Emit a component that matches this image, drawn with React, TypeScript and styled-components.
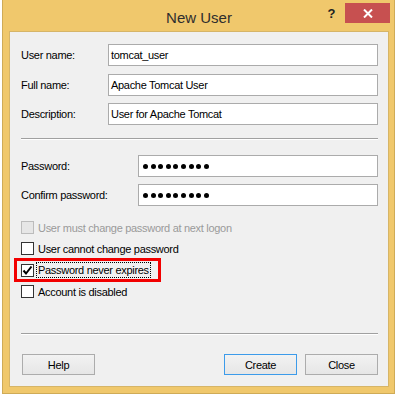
import React from "react";
import styled, { createGlobalStyle, css } from "styled-components";

const GlobalStyle = createGlobalStyle`
  html, body {
    margin: 0;
    padding: 0;
    background: #ffffff;
  }
  body {
    font-family: "Liberation Sans", Arial, sans-serif;
  }
`;

const Window = styled.div`
  margin-left: 2px;
  width: 393px;
  height: 394px;
  box-sizing: border-box;
  background: #f0c86c;
  border: 1px solid #cfab57;
  border-top: none;
  padding: 0 5px 6px 6px;
  display: flex;
  flex-direction: column;
`;

const TitleBar = styled.div`
  height: 31px;
  flex: none;
  display: grid;
  grid-template-columns: 1fr auto 1fr;
  align-items: start;
`;

const Title = styled.div`
  grid-column: 2;
  font-family: "Liberation Sans", Arial, sans-serif;
  font-size: 15px;
  line-height: 30px;
  padding-top: 3px;
  color: #2e2e2e;
  white-space: nowrap;
`;

const Controls = styled.div`
  grid-column: 3;
  justify-self: end;
  display: flex;
  margin-top: 3px;
  margin-right: -1px;
`;

const HelpGlyph = styled.div`
  width: 27px;
  height: 20px;
  display: flex;
  align-items: center;
  justify-content: center;
  font-family: "Liberation Sans", Arial, sans-serif;
  font-weight: bold;
  font-size: 13px;
  color: #222;
`;

const CloseButton = styled.div`
  width: 45px;
  height: 20px;
  background: #c75050;
  display: flex;
  align-items: center;
  justify-content: center;
`;

const Content = styled.div`
  flex: 1;
  background: #f0f0f0;
  border: 1px solid #d6b568;
  padding: 12px 10px 11px 11px;
  display: flex;
  flex-direction: column;
`;

const FieldGrid = styled.div<{ $labelWidth: number; $gap: number }>`
  display: grid;
  grid-template-columns: ${(p) => p.$labelWidth}px 1fr;
  row-gap: ${(p) => p.$gap}px;
  align-items: center;
`;

const textStyle = css`
  font-family: "Liberation Sans", Arial, sans-serif;
  font-size: 11px;
  letter-spacing: -0.3px;
`;

const Label = styled.div`
  ${textStyle};
  color: #000;
  white-space: nowrap;
`;

const TextBox = styled.div`
  ${textStyle};
  height: 22px;
  box-sizing: border-box;
  border: 1px solid #ababab;
  background: #ffffff;
  padding: 0 2px;
  line-height: 20px;
  color: #000;
  white-space: nowrap;
  overflow: hidden;
`;

const PasswordBox = styled.div`
  height: 22px;
  box-sizing: border-box;
  border: 1px solid #ababab;
  background: #ffffff;
  padding: 0 4px;
  display: flex;
  align-items: center;
  gap: 2.6px;
`;

const Dot = styled.span`
  width: 5px;
  height: 5px;
  border-radius: 50%;
  background: #000;
  flex: none;
`;

const Separator = styled.div<{ $auto?: boolean }>`
  height: 0;
  border-top: 1px solid #a0a0a0;
  border-bottom: 1px solid #ffffff;
  margin-top: ${(p) => (p.$auto ? "auto" : "13px")};
  margin-bottom: ${(p) => (p.$auto ? "19px" : "15px")};
`;

const CheckGroup = styled.div`
  margin-top: 11px;
  display: flex;
  flex-direction: column;
`;

const CheckRow = styled.div`
  position: relative;
  height: 21.33px;
  display: flex;
  align-items: center;
`;

const Box = styled.span<{ $disabled?: boolean }>`
  width: 13px;
  height: 13px;
  box-sizing: border-box;
  flex: none;
  border: 1px solid ${(p) => (p.$disabled ? "#bcbcbc" : "#333333")};
  background: ${(p) => (p.$disabled ? "#e6e6e6" : "#ffffff")};
  display: flex;
  align-items: center;
  justify-content: center;
`;

const CheckLabel = styled.span<{ $disabled?: boolean; $focused?: boolean }>`
  ${textStyle};
  color: ${(p) => (p.$disabled ? "#9a9a9a" : "#000")};
  white-space: nowrap;
  margin-left: ${(p) => (p.$focused ? "2px" : "4px")};
  padding: 0 ${(p) => (p.$focused ? "1px" : "0")};
  line-height: 14px;
  border: ${(p) => (p.$focused ? "1px dotted #000" : "none")};
`;

const Highlight = styled.div`
  position: absolute;
  left: -7px;
  top: -2px;
  width: 147px;
  height: 24px;
  box-sizing: border-box;
  border: 3px solid #f20000;
  pointer-events: none;
`;

const ButtonRow = styled.div`
  display: flex;
  gap: 8px;
`;

const Button = styled.div<{ $default?: boolean; $pushRight?: boolean }>`
  ${textStyle};
  width: 73px;
  height: 21px;
  box-sizing: border-box;
  border: 1px solid ${(p) => (p.$default ? "#3c9bea" : "#acacac")};
  background: linear-gradient(#f2f2f2, #e6e6e6);
  display: flex;
  align-items: center;
  justify-content: center;
  color: #000;
  margin-left: ${(p) => (p.$pushRight ? "1px" : "0")};
  margin-right: ${(p) => (p.$pushRight ? "auto" : "0")};
`;

const CheckMark = () => (
  <svg width="13" height="13" viewBox="0 0 13 13" style={{ display: "block", margin: -1 }}>
    <path d="M2.5 6.5 L5 9.5 L10.5 2.5" fill="none" stroke="#000" strokeWidth="2" />
  </svg>
);

const CloseX = () => (
  <svg width="10" height="9" viewBox="0 0 10 9">
    <path d="M1 0.5 L9 8.5 M9 0.5 L1 8.5" stroke="#fff" strokeWidth="2" />
  </svg>
);

type CheckItem = { label: string; checked?: boolean; disabled?: boolean; focused?: boolean; highlight?: boolean };

const checks: CheckItem[] = [
  { label: "User must change password at next logon", disabled: true },
  { label: "User cannot change password" },
  { label: "Password never expires", checked: true, focused: true, highlight: true },
  { label: "Account is disabled" },
];

const PasswordDots = ({ count }: { count: number }) => (
  <PasswordBox>
    {Array.from({ length: count }).map((_, i) => (
      <Dot key={i} />
    ))}
  </PasswordBox>
);

export default function App() {
  return (
    <>
      <GlobalStyle />
      <Window>
        <TitleBar>
          <Title>New User</Title>
          <Controls>
            <HelpGlyph>?</HelpGlyph>
            <CloseButton>
              <CloseX />
            </CloseButton>
          </Controls>
        </TitleBar>
        <Content>
          <FieldGrid $labelWidth={87} $gap={7.5}>
            <Label>User name:</Label>
            <TextBox>tomcat_user</TextBox>
            <Label>Full name:</Label>
            <TextBox>Apache Tomcat User</TextBox>
            <Label>Description:</Label>
            <TextBox>User for Apache Tomcat</TextBox>
          </FieldGrid>
          <Separator />
          <FieldGrid $labelWidth={117} $gap={7}>
            <Label>Password:</Label>
            <PasswordDots count={9} />
            <Label>Confirm password:</Label>
            <PasswordDots count={9} />
          </FieldGrid>
          <CheckGroup>
            {checks.map((c) => (
              <CheckRow key={c.label}>
                <Box $disabled={c.disabled}>{c.checked && <CheckMark />}</Box>
                <CheckLabel $disabled={c.disabled} $focused={c.focused}>
                  {c.label}
                </CheckLabel>
                {c.highlight && <Highlight />}
              </CheckRow>
            ))}
          </CheckGroup>
          <Separator $auto />
          <ButtonRow>
            <Button $pushRight>Help</Button>
            <Button $default>Create</Button>
            <Button>Close</Button>
          </ButtonRow>
        </Content>
      </Window>
    </>
  );
}
